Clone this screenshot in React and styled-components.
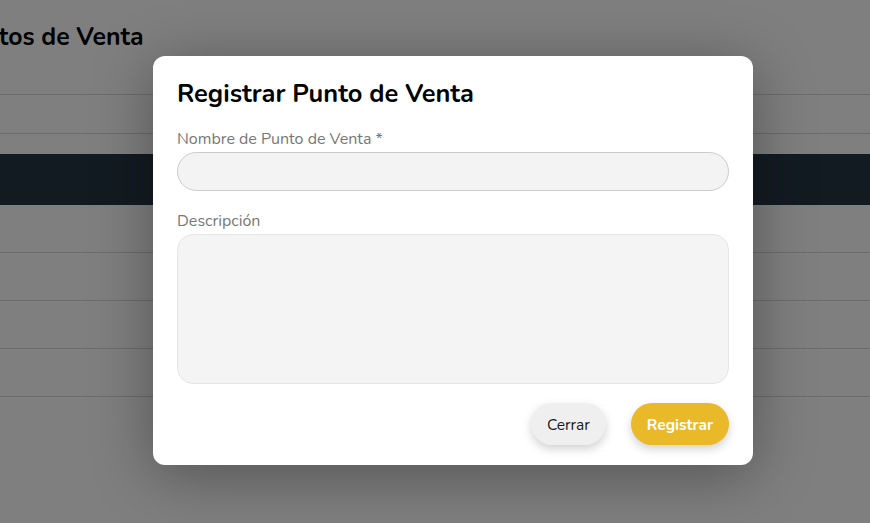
import React from 'react';
import styled, { createGlobalStyle } from 'styled-components';

const GlobalStyle = createGlobalStyle`
    html, body {
        margin: 0;
        padding: 0;
        background: #ffffff;
        font-family: "Nunito", Lato, "Noto Sans", sans-serif;
        overflow: hidden;
    }
`

const Page = styled.main`
    width: 870px;
    height: 523px;
    overflow: hidden;
    position: relative;
`

const Content = styled.section`
    margin-left: -46px;
    padding-top: 22px;
`

const PageTitle = styled.h1`
    margin: 0;
    font-size: 24.8px;
    font-weight: 700;
    color: #000;
    height: 30px;
    line-height: 30px;
    white-space: nowrap;
`

const FilterBar = styled.div`
    margin-top: 42px;
    height: 38px;
    border-top: 1px solid #d8d8d8;
    border-bottom: 1px solid #d8d8d8;
`

const Table = styled.div`
    margin-top: 20px;
`

const HeadRow = styled.div`
    height: 51px;
    background: #263644;
`

const Row = styled.div`
    height: 47px;
    border-bottom: 1px solid #d8d8d8;
`

const Overlay = styled.div`
    position: absolute;
    inset: 0;
    background: rgba(0, 0, 0, 0.5);
    display: flex;
    justify-content: center;
    align-items: flex-start;
    padding: 56px 0 0 36px;
    box-sizing: border-box;
`

const Modal = styled.div`
    width: 600px;
    box-sizing: border-box;
    background: #fff;
    border-radius: 12px;
    padding: 23px 24px 20px;
    box-shadow: 0 10px 60px rgba(0, 0, 0, 0.35);
    display: flex;
    flex-direction: column;
`

const ModalTitle = styled.h2`
    margin: 0;
    font-size: 25.4px;
    font-weight: 700;
    color: #000;
    line-height: 30px;
`

const Field = styled.label`
    display: flex;
    flex-direction: column;
    gap: 3px;
    margin-top: 20px;
`

const Label = styled.span`
    font-size: 16px;
    color: #777777;
    line-height: 20px;
`

const Input = styled.input`
    height: 39px;
    box-sizing: border-box;
    border: 1px solid #cccccc;
    border-radius: 20px;
    background: #f3f3f3;
    outline: none;
    padding: 0 16px;
    font: inherit;
`

const TextArea = styled.textarea`
    height: 150px;
    box-sizing: border-box;
    border: 1px solid #e6e6e6;
    border-radius: 16px;
    background: #f4f4f4;
    outline: none;
    resize: none;
    padding: 12px 16px;
    font: inherit;
`

const Actions = styled.div`
    display: flex;
    justify-content: flex-end;
    gap: 25px;
    margin-top: 19px;
`

const Button = styled.button`
    height: 42px;
    border: none;
    border-radius: 21px;
    padding: 0 16px;
    font-family: inherit;
    font-size: 15.5px;
    font-weight: ${p => p.$primary ? 700 : 400};
    color: ${p => p.$primary ? '#fff' : '#1a1a1a'};
    background: ${p => p.$primary ? '#e9b92a' : '#efefef'};
    box-shadow: 0 4px 10px rgba(0, 0, 0, 0.18);
    cursor: pointer;
`

export default function App() {
    return (
        <Page>
            <GlobalStyle />
            <Content>
                <PageTitle>Puntos de Venta</PageTitle>
                <FilterBar />
                <Table>
                    <HeadRow />
                    <Row />
                    <Row />
                    <Row />
                    <Row />
                </Table>
            </Content>
            <Overlay>
                <Modal>
                    <ModalTitle>Registrar Punto de Venta</ModalTitle>
                    <Field>
                        <Label>Nombre de Punto de Venta *</Label>
                        <Input type="text" />
                    </Field>
                    <Field>
                        <Label>Descripción</Label>
                        <TextArea />
                    </Field>
                    <Actions>
                        <Button>Cerrar</Button>
                        <Button $primary>Registrar</Button>
                    </Actions>
                </Modal>
            </Overlay>
        </Page>
    )
}
